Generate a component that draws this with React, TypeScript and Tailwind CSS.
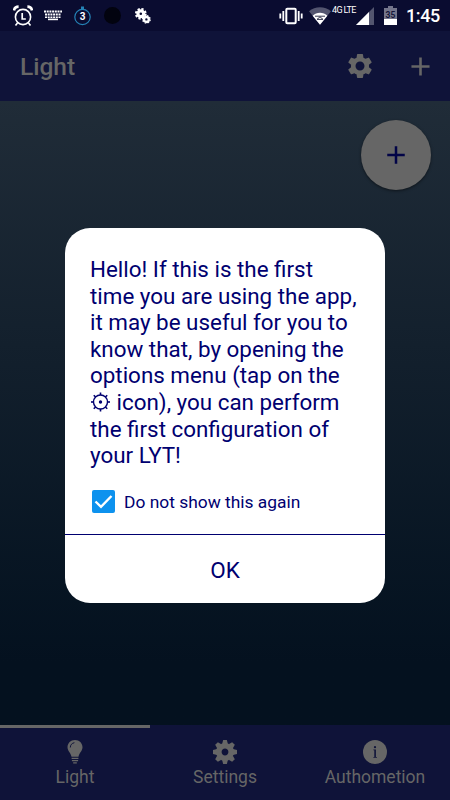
import React, { useState } from 'react';
import { MdSettings, MdAdd } from 'react-icons/md';

function StatusBar() {
    return (
        <div className="h-[31px] shrink-0 bg-[#0a0c30] flex items-center justify-between pl-[13px] pr-[9px] text-white">
            <div className="flex items-center">
                {/* Alarm */}
                <svg width="20" height="22" viewBox="0 0 20 22" fill="none" stroke="currentColor" strokeWidth="1.6">
                    <circle cx="10" cy="12" r="7.6" />
                    <path d="M9.2 8v6h3.6" strokeWidth="1.7" />
                    <path d="M1 5.5C1.4 3 3.2 1.6 5.6 1.6M14.4 1.6c2.4 0 4.2 1.4 4.6 3.9" strokeWidth="2.6" />
                    <path d="M4.5 18l-2 2.6M15.5 18l2 2.6" />
                </svg>
                {/* Keyboard */}
                <svg className="ml-[11px]" width="18" height="11" viewBox="0 0 18 11" fill="none" stroke="currentColor">
                    <path d="M0 1.5h18" strokeWidth="2" strokeDasharray="2 .7" />
                    <path d="M1 4.5h16" strokeWidth="2" strokeDasharray="2 .7" />
                    <path d="M1 7.3h16" strokeWidth="1.6" strokeDasharray="2 .7" />
                    <path d="M4 9.4h10" strokeWidth="1.6" />
                </svg>
                {/* Timer */}
                <svg className="ml-[12px]" width="18" height="20" viewBox="0 0 18 20">
                    <circle cx="8.5" cy="11" r="7.7" fill="none" stroke="#2582b5" strokeWidth="1.2" />
                    <path d="M7 0.5h3v3H7z" fill="#2582b5" />
                    <text x="8.5" y="14.3" textAnchor="middle" fill="#fff" className="font-[Roboto] font-bold text-[10px]">3</text>
                </svg>
                <div className="ml-[12px] size-[17px] rounded-full bg-[#02030f]" />
                {/* Gears */}
                <svg className="ml-[14px]" width="16" height="16" viewBox="0 0 16 16" fill="none" stroke="currentColor">
                    <circle cx="5.8" cy="5.8" r="2.9" strokeWidth="3.2" />
                    <circle cx="5.8" cy="5.8" r="4.9" strokeWidth="2" strokeDasharray="2.2 1.65" />
                    <circle cx="11.4" cy="11.4" r="2.4" strokeWidth="2.4" />
                    <circle cx="11.4" cy="11.4" r="3.8" strokeWidth="1.2" strokeDasharray="1.6 1.38" />
                </svg>
            </div>
            <div className="flex items-center">
                {/* Vibrate */}
                <svg width="24" height="18" viewBox="0 0 24 18" fill="none" stroke="currentColor">
                    <rect x="7.3" y="1.8" width="9.4" height="14.4" rx="1" strokeWidth="2" />
                    <path d="M4.3 4v10M19.7 4v10" strokeWidth="1.8" />
                    <path d="M1.3 6.5v5M22.7 6.5v5" strokeWidth="1.8" />
                </svg>
                {/* Wifi */}
                <svg className="ml-[6px]" width="22" height="18" viewBox="0 0 22 18">
                    <path d="M0 4.2C6 -1 16 -1 22 4.2L11 17.8z" fill="#53556f" />
                    <path d="M3.6 8.7C7.5 4.8 14.5 4.8 18.4 8.7L11 17.8z" fill="#fff" />
                    <path d="M6 9.2h10M8 12.4l3-2.6 3 2.6z" fill="none" stroke="#35374f" />
                </svg>
                <div className="ml-[1px] mb-[11px] w-[23px] text-[9px] leading-[9px] tracking-[-0.65px] whitespace-nowrap">4G LTE</div>
                {/* Signal */}
                <svg className="ml-[1px]" width="18" height="18" viewBox="0 0 18 18">
                    <path d="M18 0v18H0z" fill="#53556f" />
                    <path d="M13 5v13H0z" fill="#fff" />
                </svg>
                {/* Battery */}
                <svg className="ml-[10px]" width="13" height="19" viewBox="0 0 13 19">
                    <path d="M4 0h5v2h4v17H0V2h4z" fill="#74758b" />
                    <path d="M0 13h13v6H0z" fill="#fff" />
                    <text x="6.5" y="12.3" textAnchor="middle" fill="#14163a" className="font-[Roboto] font-bold text-[8.5px]">35</text>
                </svg>
                <div className="ml-[9px] w-[35px] text-[18px] leading-[20px] font-medium tracking-[-0.4px]">1:45</div>
            </div>
        </div>
    );
}

function BulbIcon() {
    return (
        <svg width="16" height="24" viewBox="0 0 16 24">
            <path d="M8 0C3.6 0 .5 3.2 .5 7.2c0 3.8 3.4 5.6 4 9.6h7c.6-4 4-5.8 4-9.6C15.5 3.2 12.4 0 8 0z" fill="#666" />
            <path d="M3.3 7.5C3.3 4.9 5 3.1 7.4 2.7" fill="none" stroke="#0f1339" strokeWidth="1" />
            <path d="M4.6 18.4h6.8M4.9 20.6h6.2M6.2 22.8h3.6" stroke="#666" strokeWidth="1.3" />
        </svg>
    );
}

function GearIcon() {
    return (
        <svg width="24" height="24" viewBox="-12 -12 24 24">
            <circle r="6.2" fill="none" stroke="#666" strokeWidth="5.6" />
            {[0, 45, 90, 135, 180, 225, 270, 315].map((a) => (
                <path key={a} d="M-2.9 -8L-1.9 -12H1.9L2.9 -8z" fill="#666" transform={`rotate(${a})`} />
            ))}
        </svg>
    );
}

function InfoIcon() {
    return (
        <svg width="24" height="24" viewBox="0 0 24 24">
            <circle cx="12" cy="12" r="12" fill="#666" />
            <path d="M10.4 9.5h2.5v7.5h1v.8h-3.5V17h.9v-6.7h-.9z" fill="#0f1339" />
            <circle cx="12" cy="7.2" r="1.1" fill="#0f1339" />
        </svg>
    );
}

function SunGear() {
    return (
        <svg className="inline-block align-[-2px] mr-[1px]" width="20" height="20" viewBox="-10.5 -10 20 20" fill="none" stroke="currentColor" strokeWidth="1.4">
            <circle r="7" />
            <circle r="1.7" fill="currentColor" stroke="none" />
            {[0, 45, 90, 135, 180, 225, 270, 315].map((a) => (
                <path key={a} d="M0 -7V-9.5" strokeWidth="1.6" transform={`rotate(${a})`} />
            ))}
        </svg>
    );
}

const tabs = [
    { label: 'Light', icon: <BulbIcon /> },
    { label: 'Settings', icon: <GearIcon /> },
    { label: 'Authometion', icon: <InfoIcon /> },
];

export default function App() {
    const [checked, setChecked] = useState(true);
    const [active, setActive] = useState(0);

    return (
        <div className="relative w-[450px] h-[800px] overflow-hidden flex flex-col font-[Roboto,sans-serif]">
            <StatusBar />

            {/* Header */}
            <header className="h-[70px] shrink-0 bg-[#0f1339] flex items-center justify-between pl-5 pr-[14.5px] text-[#666]">
                <h1 className="pt-[3px] text-[24.5px] font-medium">Light</h1>
                <div className="flex items-center gap-[29.5px]">
                    <MdSettings size={30} />
                    <MdAdd size={31} />
                </div>
            </header>

            <main className="flex-1 bg-linear-to-b from-[#202c38] to-[#04111f] to-90% flex justify-end items-start pt-[19px] pr-[19px]">
                <button className="size-[70px] rounded-full bg-[#666] text-[#020447] flex items-center justify-center shadow-[0_1px_3px_rgba(0,0,0,0.5)]">
                    <MdAdd size={30} />
                </button>
            </main>

            {/* Tabs */}
            <nav className="h-[75px] shrink-0 bg-[#0f1339] grid grid-cols-3 text-[#666]">
                {tabs.map((tab, i) => (
                    <button
                        key={tab.label}
                        onClick={() => setActive(i)}
                        className={`flex flex-col items-center border-t-3 pt-[12px] ${active === i ? 'border-[#666]' : 'border-transparent'}`}
                    >
                        {tab.icon}
                        <span className="mt-[3px] text-[17.5px] leading-[20px]">{tab.label}</span>
                    </button>
                ))}
            </nav>

            {/* Dialog */}
            <div className="absolute left-[65px] top-[228px] w-[320px] h-[375px] rounded-[25px] bg-white text-[#000070] flex flex-col">
                <p className="pl-[25px] pt-[28px] text-[22.4px] leading-[26.6px] whitespace-nowrap">
                    Hello! If this is the first<br />
                    time you are using the app,<br />
                    it may be useful for you to<br />
                    know that, by opening the<br />
                    options menu (tap on the<br />
                    <SunGear /> icon), you can perform<br />
                    the first configuration of<br />
                    your LYT!
                </p>
                <label className="mt-[21px] ml-[27px] flex items-center gap-[9px] text-[17.4px] leading-[24px]">
                    <input type="checkbox" className="sr-only" checked={checked} onChange={() => setChecked(!checked)} />
                    <span className="size-[23px] rounded-[2px] bg-[#0d92ee] flex items-center justify-center">
                        {checked && (
                            <svg width="19" height="15" viewBox="0 0 19 15" fill="none" stroke="#fff" strokeWidth="2.4">
                                <path d="M1.5 7.5L7 12.8L17.500 2" />
                            </svg>
                        )}
                    </span>
                    Do not show this again
                </label>
                <button className="mt-auto h-[69px] border-t border-[#000070] pt-[4px] text-[22.5px]">OK</button>
            </div>
        </div>
    );
}
